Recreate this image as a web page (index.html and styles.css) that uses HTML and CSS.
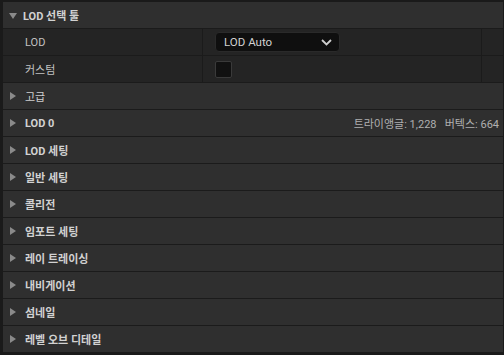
FILE: index.html
```html
<!DOCTYPE html>
<html lang="ko">
<head>
  <meta charset="UTF-8">
  <title>LOD 선택 툴</title>
  <link rel="stylesheet" href="styles.css">
</head>
<body>
  <div class="panel">
    <div class="row section open">
      <span class="arrow down"></span>
      <span class="title">LOD 선택 툴</span>
    </div>
    <div class="row prop">
      <div class="name">LOD</div>
      <div class="value">
        <div class="combo">
          <span>LOD Auto</span>
          <svg width="11" height="7" viewBox="0 0 11 7"><path d="M1 1 L5.5 5.5 L10 1" fill="none" stroke="#cfcfcf" stroke-width="1.8"/></svg>
        </div>
      </div>
      <div class="extra"></div>
    </div>
    <div class="row prop">
      <div class="name">커스텀</div>
      <div class="value"><div class="check"></div></div>
      <div class="extra"></div>
    </div>
    <div class="row section">
      <span class="arrow"></span>
      <span class="title light">고급</span>
    </div>
    <div class="row section">
      <span class="arrow"></span>
      <span class="title">LOD 0</span>
      <span class="stats">트라이앵글: 1,228&nbsp;&nbsp;&nbsp;버텍스: 664</span>
    </div>
    <div class="row section"><span class="arrow"></span><span class="title">LOD 세팅</span></div>
    <div class="row section"><span class="arrow"></span><span class="title">일반 세팅</span></div>
    <div class="row section"><span class="arrow"></span><span class="title">콜리전</span></div>
    <div class="row section"><span class="arrow"></span><span class="title">임포트 세팅</span></div>
    <div class="row section"><span class="arrow"></span><span class="title">레이 트레이싱</span></div>
    <div class="row section"><span class="arrow"></span><span class="title">내비게이션</span></div>
    <div class="row section"><span class="arrow"></span><span class="title">섬네일</span></div>
    <div class="row section"><span class="arrow"></span><span class="title">레벨 오브 디테일</span></div>
  </div>
</body>
</html>
```

FILE: styles.css
```css
body {
  margin: 0;
  background: #1a1a1a;
  font-family: Roboto, "Noto Sans CJK KR", sans-serif;
  font-size: 11px;
  color: #c4c4c4;
  height: 355px;
  overflow: hidden;
}
.panel {
  padding: 2px 1px 0 3px;
  display: flex;
  flex-direction: column;
}
.row {
  height: 26px;
  border-bottom: 1px solid #1b1b1b;
  display: flex;
  align-items: center;
}
.section {
  background: #2f2f2f;
  padding-left: 7px;
}
.arrow {
  width: 0;
  height: 0;
  border-top: 4.5px solid transparent;
  border-bottom: 4.5px solid transparent;
  border-left: 6px solid #8a8a8a;
  margin: 0 9px 0 0;
}
.arrow.down {
  border-left: 4.5px solid transparent;
  border-right: 4.5px solid transparent;
  border-top: 6px solid #8a8a8a;
  border-bottom: 0;
  margin: 1px 6px 0 -1px;
}
.title {
  font-weight: 700;
  color: #d2d2d2;
}
.title.light {
  font-weight: 400;
  color: #cfcfcf;
}
.stats {
  margin-left: auto;
  padding-right: 4px;
  color: #b0b0b0;
}
.prop {
  background: #242424;
  display: grid;
  grid-template-columns: 200px 279px 1fr;
  align-items: stretch;
}
.prop > div {
  display: flex;
  align-items: center;
}
.name {
  padding-left: 22px;
  border-right: 1px solid #1b1b1b;
  color: #c2c2c2;
}
.value {
  padding-left: 12px;
  border-right: 1px solid #1b1b1b;
}
.combo {
  width: 108px;
  height: 18px;
  padding: 0 7px 0 8px;
  background: #0f0f0f;
  border: 1px solid #2a2a2a;
  border-radius: 4px;
  display: flex;
  align-items: center;
  justify-content: space-between;
  color: #d2d2d2;
  font-size: 11.5px;
}
.check {
  width: 15px;
  height: 15px;
  background: #111111;
  border: 1px solid #3a3a3a;
  border-radius: 2px;
}
```
